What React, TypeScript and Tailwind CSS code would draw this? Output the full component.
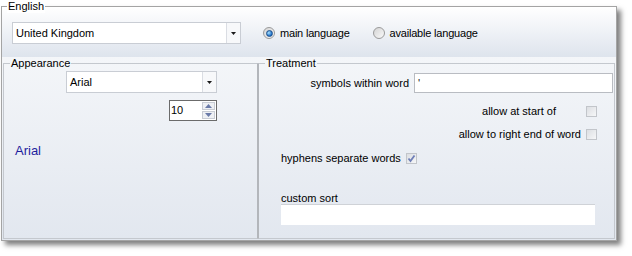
import React from "react";

function ComboArrow() {
  return (
    <div className="w-[14px] h-full border-l border-[#dadde3] bg-[#f7f8fa] flex items-center justify-center">
      <svg width="5" height="3" viewBox="0 0 5 3">
        <path d="M0 0h5L2.5 3z" fill="#1a1a1a" />
      </svg>
    </div>
  );
}

function Combo({ value, className }: { value: string; className: string }) {
  return (
    <div className={`flex items-center bg-white border border-[#c9cdd4] ${className}`}>
      <span className="flex-1 pl-[3px] leading-[13px]">{value}</span>
      <ComboArrow />
    </div>
  );
}

function Radio({ checked }: { checked?: boolean }) {
  return (
    <div className="w-[12px] h-[12px] rounded-full border border-[#9a9a9a] bg-gradient-to-br from-[#d4d4d4] to-[#fafafa] flex items-center justify-center">
      {checked && (
        <div className="w-[7px] h-[7px] rounded-full bg-[radial-gradient(circle_at_35%_35%,#a8e2ff,#1a6cc6_70%)] border border-[#1d4f8a]" />
      )}
    </div>
  );
}

function Check({ checked }: { checked?: boolean }) {
  return (
    <div className="w-[11px] h-[11px] border border-[#c2c5ca] bg-gradient-to-br from-[#dcdee2] to-[#f6f7f8] flex items-center justify-center">
      {checked && (
        <svg width="9" height="9" viewBox="0 0 9 9">
          <path d="M1.5 4.5 3.5 7 7.5 1.5" fill="none" stroke="#6f7fb8" strokeWidth="1.8" />
        </svg>
      )}
    </div>
  );
}

function Spinner() {
  return (
    <div className="ml-[165px] mt-[7px] w-[48px] h-[21px] flex bg-white border border-[#6b6b6b]">
      <span className="flex-1 pl-[1px] leading-[19px]">10</span>
      <div className="w-[13px] mr-[1px] flex flex-col justify-center gap-[1px]">
        {[true, false].map((up) => (
          <div
            key={String(up)}
            className="h-[8px] border border-[#c8ccd4] bg-[#eef0f4] flex items-center justify-center">
            <svg width="7" height="4" viewBox="0 0 7 4">
              <path d={up ? "M0 4h7L3.5 0z" : "M0 0h7L3.5 4z"} fill="#6a7aa8" />
            </svg>
          </div>
        ))}
      </div>
    </div>
  );
}

export default function App() {
  return (
    <div className="w-[632px] h-[256px] bg-white text-[11px] text-black font-['Liberation_Sans',Arial,sans-serif]">
      <div className="mt-[6px] ml-[1px] w-[616px] h-[235px] border border-[#a4a4a4] shadow-[4px_4px_5px_rgba(0,0,0,0.5)] flex flex-col">
        <div className="h-[50px] bg-gradient-to-b from-[#ffffff] to-[#dee4ed]">
          <div className="-mt-[7px] ml-[5px] w-fit px-[1px] bg-white leading-[13px]">English</div>
          <div className="mt-[9px] flex items-center">
            <Combo value="United Kingdom" className="ml-[10px] w-[229px] h-[22px]" />
            <div className="ml-[22px] flex items-center gap-[5px]">
              <Radio checked />
              <span className="tracking-[-0.2px]">main language</span>
            </div>
            <div className="ml-[23px] flex items-center gap-[5px]">
              <Radio />
              <span className="tracking-[-0.2px]">available language</span>
            </div>
          </div>
        </div>
        <div className="flex-1 flex pl-[1px] pb-[1px] bg-gradient-to-b from-[#f4f6f9] to-[#e2e7ef]">
          <fieldset className="w-[255px] border border-[#c4c8ce] border-r-[#b3b6bb]">
            <legend className="ml-[6px] px-[1px] leading-[13px]">Appearance</legend>
            <Combo value="Arial" className="ml-[62px] mt-[1px] w-[151px] h-[22px]" />
            <Spinner />
            <div className="ml-[11px] mt-[22px] text-[13px] leading-[16px] text-[#1e1e9e]">Arial</div>
          </fieldset>
          <fieldset className="w-[357px] border border-[#c4c8ce] border-l-[#b3b6bb]">
            <legend className="ml-[6px] px-[1px] leading-[13px]">Treatment</legend>
            <div className="mt-[3px] mr-[1px] flex items-center justify-end gap-[5px]">
              <span>symbols within word</span>
              <div className="w-[199px] h-[20px] bg-white border border-[#b9bcc2] pl-[3px] leading-[18px] text-[#111]">'</div>
            </div>
            <div className="mt-[13px] mr-[17px] h-[11px] flex items-center justify-end">
              <span>allow at start of</span>
              <div className="ml-[30px]">
                <Check />
              </div>
            </div>
            <div className="mt-[12px] mr-[17px] h-[11px] flex items-center justify-end">
              <span>allow to right end of word</span>
              <div className="ml-[5px]">
                <Check />
              </div>
            </div>
            <div className="mt-[13px] ml-[22px] h-[11px] flex items-center gap-[5px]">
              <span>hyphens separate words</span>
              <Check checked />
            </div>
            <div className="mt-[28px] ml-[22px] leading-[12px]">custom sort</div>
            <div className="ml-[22px] w-[314px] h-[21px] bg-white border-t border-[#cfd2d7]" />
          </fieldset>
        </div>
      </div>
    </div>
  );
}
